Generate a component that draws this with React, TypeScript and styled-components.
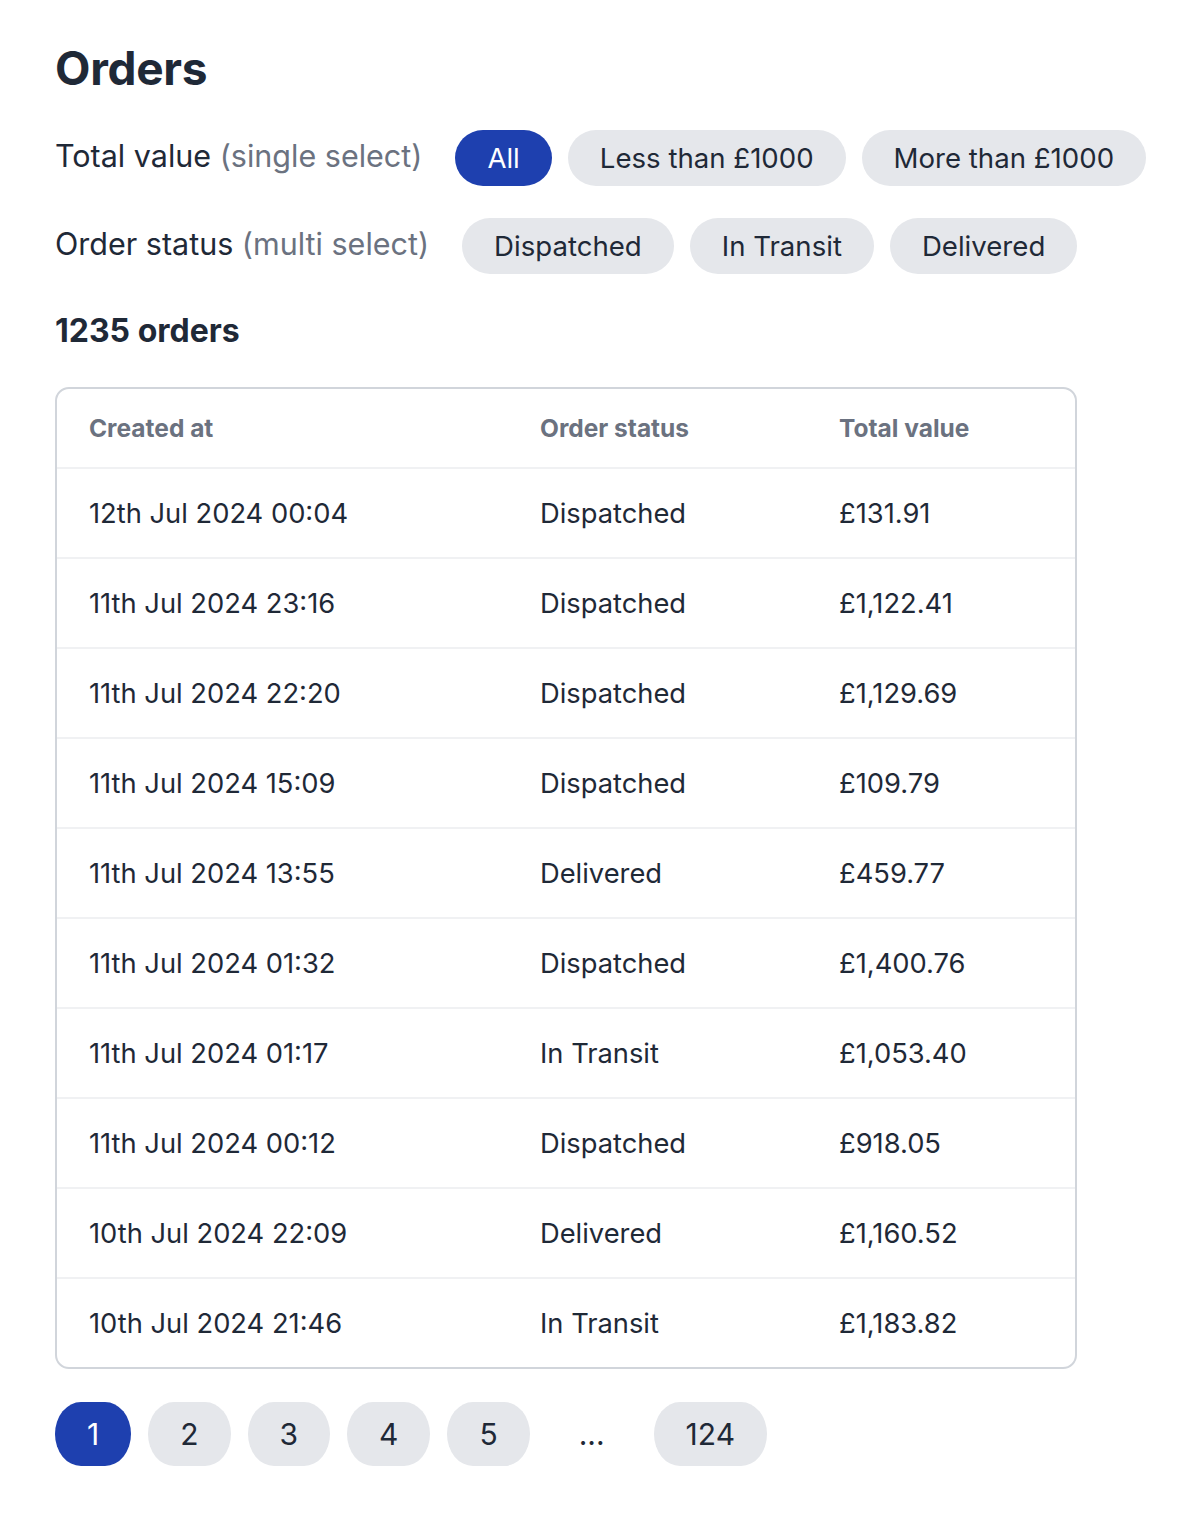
import React, { useState } from 'react';
import styled, { createGlobalStyle } from 'styled-components';

const orders = [
  { created: '12th Jul 2024 00:04', status: 'Dispatched', total: '£131.91' },
  { created: '11th Jul 2024 23:16', status: 'Dispatched', total: '£1,122.41' },
  { created: '11th Jul 2024 22:20', status: 'Dispatched', total: '£1,129.69' },
  { created: '11th Jul 2024 15:09', status: 'Dispatched', total: '£109.79' },
  { created: '11th Jul 2024 13:55', status: 'Delivered', total: '£459.77' },
  { created: '11th Jul 2024 01:32', status: 'Dispatched', total: '£1,400.76' },
  { created: '11th Jul 2024 01:17', status: 'In Transit', total: '£1,053.40' },
  { created: '11th Jul 2024 00:12', status: 'Dispatched', total: '£918.05' },
  { created: '10th Jul 2024 22:09', status: 'Delivered', total: '£1,160.52' },
  { created: '10th Jul 2024 21:46', status: 'In Transit', total: '£1,183.82' },
];

const valueOptions = ['All', 'Less than £1000', 'More than £1000'];
const statusOptions = ['Dispatched', 'In Transit', 'Delivered'];
const pages: (number | '...')[] = [1, 2, 3, 4, 5, '...', 124];

const App = () => {
  const [value, setValue] = useState('All');
  const [statuses, setStatuses] = useState<string[]>([]);
  const [page, setPage] = useState(1);

  const toggleStatus = (s: string) => {
    setStatuses(prev => (prev.includes(s) ? prev.filter(x => x !== s) : [...prev, s]));
  };

  return (
    <Page>
      <GlobalStyle />
      <Title>Orders</Title>
      <FilterRow>
        <FilterLabel>
          Total value <Hint>(single select)</Hint>
        </FilterLabel>
        <ChipList>
          {valueOptions.map(o => (
            <Chip key={o} $active={value === o} onClick={() => setValue(o)}>
              {o}
            </Chip>
          ))}
        </ChipList>
      </FilterRow>
      <FilterRow>
        <FilterLabel>
          Order status <Hint>(multi select)</Hint>
        </FilterLabel>
        <ChipList>
          {statusOptions.map(o => (
            <Chip key={o} $active={statuses.includes(o)} onClick={() => toggleStatus(o)}>
              {o}
            </Chip>
          ))}
        </ChipList>
      </FilterRow>

      <Count>1235 orders</Count>

      <TableBox>
        <HeadRow>
          <HeadCell>Created at</HeadCell>
          <HeadCell>Order status</HeadCell>
          <HeadCell>Total value</HeadCell>
        </HeadRow>
        {orders.map((o, i) => (
          <BodyRow key={i}>
            <Cell>{o.created}</Cell>
            <Cell>{o.status}</Cell>
            <Cell>{o.total}</Cell>
          </BodyRow>
        ))}
      </TableBox>

      <Pager>
        {pages.map((p, i) =>
          p === '...' ? (
            <Ellipsis key={i}>...</Ellipsis>
          ) : (
            <PageButton key={i} $active={page === p} onClick={() => setPage(p)}>
              {p}
            </PageButton>
          )
        )}
      </Pager>
    </Page>
  );
};

export default App;

const GlobalStyle = createGlobalStyle`
  body {
    margin: 0;
    background: #ffffff;
    font-family: Inter, "Noto Sans", sans-serif;
    color: #1f2937;
  }
`;

const Page = styled.div`
  padding: 40px 55px 56px;
  width: 1022px;
`;

const Title = styled.h1`
  margin: 0 0 34px;
  font-size: 46px;
  line-height: 56px;
  font-weight: 700;
  color: #1f2937;
  letter-spacing: -0.3px;
`;

const FilterRow = styled.div`
  display: flex;
  align-items: center;
  gap: 33px;
  margin-bottom: 32px;
`;

const FilterLabel = styled.div`
  font-size: 30.5px;
  color: #1f2937;
  white-space: nowrap;
  margin-top: -6px;
`;

const Hint = styled.span`
  color: #6b7280;
`;

const ChipList = styled.div`
  display: flex;
  gap: 16px;
`;

const Chip = styled.button<{ $active?: boolean }>`
  height: 56px;
  padding: 0 32px;
  border: none;
  border-radius: 28px;
  font-family: inherit;
  font-size: 27.6px;
  cursor: pointer;
  white-space: nowrap;
  background: ${({ $active }) => ($active ? '#1e40af' : '#e5e7eb')};
  color: ${({ $active }) => ($active ? '#ffffff' : '#1f2937')};
`;

const Count = styled.h2`
  margin: 37px 0 36px;
  font-size: 32px;
  line-height: 40px;
  font-weight: 700;
  color: #1f2937;
`;

const TableBox = styled.div`
  border: 2px solid #d1d5db;
  border-radius: 14px;
  overflow: hidden;
`;

const HeadRow = styled.div`
  box-sizing: border-box;
  display: grid;
  grid-template-columns: 451px 299px 1fr;
  height: 80px;
  align-items: center;
  border-bottom: 2px solid #f0f1f3;
`;

const HeadCell = styled.div`
  padding: 0 32px;
  font-size: 24.5px;
  font-weight: 700;
  color: #6b7280;
`;

const BodyRow = styled.div`
  box-sizing: border-box;
  display: grid;
  grid-template-columns: 451px 299px 1fr;
  height: 90px;
  align-items: center;
  border-bottom: 2px solid #f0f1f3;

  &:last-child {
    border-bottom: none;
    height: 88px;
  }
`;

const Cell = styled.div`
  padding: 0 32px;
  font-size: 27.3px;
  color: #1f2937;
`;

const Pager = styled.div`
  display: flex;
  gap: 17px;
  margin-top: 33px;
`;

const PageButton = styled.button<{ $active?: boolean }>`
  height: 64px;
  padding: 0 32px;
  border: none;
  border-radius: 26px / 32px;
  font-family: inherit;
  font-size: 30px;
  cursor: pointer;
  background: ${({ $active }) => ($active ? '#1e40af' : '#e5e7eb')};
  color: ${({ $active }) => ($active ? '#ffffff' : '#1f2937')};
`;

const Ellipsis = styled.span`
  display: flex;
  align-items: center;
  height: 64px;
  padding: 0 32px;
  font-size: 30px;
  color: #1f2937;
`;
